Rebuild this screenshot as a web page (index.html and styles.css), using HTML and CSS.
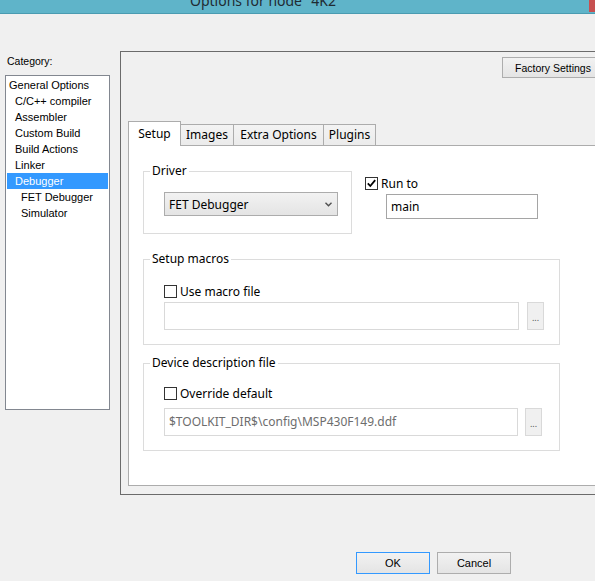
FILE: index.html
```html
<!DOCTYPE html>
<html lang="en">

<head>
    <meta charset="UTF-8">
    <title>Options for node "4K2"</title>
    <link rel="stylesheet" href="styles.css">
</head>

<body>

    <!-- Title bar -->
    <div class="titlebar">
        <span class="title">Options for node "4K2"</span>
        <span class="close"></span>
    </div>

    <div class="dialog">
        <!-- Category list -->
        <div class="sidebar">
            <div class="category-label">Category:</div>
            <ul class="category-list">
                <li>General Options</li>
                <li class="lvl1">C/C++ compiler</li>
                <li class="lvl1">Assembler</li>
                <li class="lvl1">Custom Build</li>
                <li class="lvl1">Build Actions</li>
                <li class="lvl1">Linker</li>
                <li class="lvl1 selected">Debugger</li>
                <li class="lvl2">FET Debugger</li>
                <li class="lvl2">Simulator</li>
            </ul>
        </div>

        <!-- Options panel -->
        <div class="options">
            <div class="options-top">
                <button class="btn factory">Factory Settings</button>
            </div>

            <div class="tabs">
                <div class="tab active tab-setup">Setup</div>
                <div class="tab tab-images">Images</div>
                <div class="tab tab-extra">Extra Options</div>
                <div class="tab tab-plugins">Plugins</div>
            </div>

            <div class="tab-page">
                <div class="row">
                    <div class="group driver">
                        <div class="group-title">Driver</div>
                        <div class="select">
                            <span>FET Debugger</span>
                            <svg class="chevron" width="7" height="5" viewBox="0 0 7 5">
                                <path d="M0.5 0.8 L3.5 3.8 L6.5 0.8" fill="none" stroke="#505050" stroke-width="1.4"/>
                            </svg>
                        </div>
                    </div>
                    <div class="runto">
                        <label class="check-row">
                            <svg class="checkbox" width="13" height="13" viewBox="0 0 13 13">
                                <rect x="0.5" y="0.5" width="12" height="12" fill="#fff" stroke="#333"/>
                                <path d="M2.8 6.4 L5.3 9 L10.2 3.2" fill="none" stroke="#000" stroke-width="1.8"/>
                            </svg>
                            Run to
                        </label>
                        <div class="text-input runto-input">main</div>
                    </div>
                </div>

                <div class="group macros">
                    <div class="group-title">Setup macros</div>
                    <label class="check-row">
                        <svg class="checkbox" width="13" height="13" viewBox="0 0 13 13">
                            <rect x="0.5" y="0.5" width="12" height="12" fill="#fff" stroke="#333"/>
                        </svg>
                        Use macro file
                    </label>
                    <div class="file-row">
                        <div class="text-input file-input"></div>
                        <div class="browse">...</div>
                    </div>
                </div>

                <div class="group device">
                    <div class="group-title">Device description file</div>
                    <label class="check-row">
                        <svg class="checkbox" width="13" height="13" viewBox="0 0 13 13">
                            <rect x="0.5" y="0.5" width="12" height="12" fill="#fff" stroke="#333"/>
                        </svg>
                        Override default
                    </label>
                    <div class="file-row">
                        <div class="text-input file-input ddf">$TOOLKIT_DIR$\config\MSP430F149.ddf</div>
                        <div class="browse">...</div>
                    </div>
                </div>
            </div>
        </div>
    </div>

    <!-- Dialog buttons -->
    <div class="footer">
        <button class="btn ok">OK</button>
        <button class="btn">Cancel</button>
    </div>

</body>

</html>
```

FILE: styles.css
```css
/* General Reset */
body {
    margin: 0;
    width: 595px;
    height: 581px;
    overflow: hidden;
    background: #f0f0f0;
    font-family: "Noto Sans", sans-serif;
    font-size: 12px;
    color: #000;
}

/* Title bar */
.titlebar {
    display: flex;
    height: 13px;
    overflow: hidden;
    background: #5fb4c9;
    border-bottom: 1px solid #4a9bb1;
}

.title {
    margin: -6px 0 0 190px;
    font-size: 14px;
    line-height: 14px;
    color: #1f2b33;
    white-space: nowrap;
}

.close {
    margin-left: auto;
    width: 6px;
    height: 12px;
    background: #c75050;
}

.dialog {
    display: flex;
    align-items: flex-start;
}

/* Category list */
.sidebar {
    width: 105px;
    padding-left: 5px;
    flex-shrink: 0;
}

.category-label {
    margin: 40px 0 0 2px;
    font: 10.5px/14px "Liberation Sans", Arial, sans-serif;
}

.category-list {
    list-style: none;
    margin: 7px 0 0;
    padding: 1px;
    box-sizing: border-box;
    height: 335px;
    border: 1px solid #828790;
    background: #fff;
    font: 11px "Liberation Sans", Arial, sans-serif;
}

.category-list li {
    height: 16px;
    line-height: 16px;
    padding-left: 2px;
    white-space: nowrap;
}

.category-list .lvl1 {
    padding-left: 8px;
}

.category-list .lvl2 {
    padding-left: 14px;
}

.category-list .selected {
    background: #3399ff;
    color: #fff;
}

/* Options panel */
.options {
    display: flex;
    flex-direction: column;
    flex-shrink: 0;
    box-sizing: border-box;
    width: 490px;
    height: 444px;
    margin: 37px 0 0 10px;
    padding: 5px 0 8px 7px;
    border: 1px solid #6b6b6b;
}

.options-top {
    display: flex;
    justify-content: flex-end;
}

.btn {
    height: 21px;
    padding: 0;
    border: 1px solid #adadad;
    background: linear-gradient(#f2f2f2, #e4e4e4);
    font: 10.5px "Liberation Sans", Arial, sans-serif;
    color: #000;
}

.factory {
    width: 102px;
    margin-right: 5px;
}

/* Tabs */
.tabs {
    display: flex;
    align-items: flex-end;
    margin-top: 43px;
}

.tab {
    box-sizing: border-box;
    height: 21px;
    margin-right: -1px;
    border: 1px solid #acacac;
    border-bottom: 0;
    background: linear-gradient(#f3f3f3, #ebebeb);
    line-height: 20px;
    text-align: center;
    white-space: nowrap;
}

.tab.active {
    position: relative;
    z-index: 1;
    height: 25px;
    margin-bottom: -1px;
    background: #fff;
    line-height: 24px;
}

.tab-setup {
    width: 53px;
}

.tab-images {
    width: 54px;
}

.tab-extra {
    width: 91px;
}

.tab-plugins {
    width: 53px;
}

.tab-page {
    flex: 1;
    padding: 25px 0 0 14px;
    background: #fff;
    border: 1px solid #acacac;
}

/* Group boxes */
.row {
    display: flex;
    align-items: flex-start;
}

.group {
    box-sizing: border-box;
    border: 1px solid #dcdcdc;
    padding-left: 20px;
}

.group-title {
    width: fit-content;
    margin: -9px 0 0 -14px;
    padding: 0 2px;
    background: #fff;
    line-height: 16px;
}

.driver {
    width: 209px;
    padding-bottom: 17px;
}

.select {
    display: flex;
    align-items: center;
    justify-content: space-between;
    box-sizing: border-box;
    width: 174px;
    height: 24px;
    margin-top: 13px;
    padding: 0 5px 0 4px;
    border: 1px solid #acacac;
    background: linear-gradient(#f2f2f2, #e4e4e4);
}

.runto {
    margin: 4px 0 0 13px;
}

.check-row {
    display: flex;
    align-items: center;
    gap: 3px;
    height: 16px;
    white-space: nowrap;
}

.text-input {
    box-sizing: border-box;
    background: #fff;
    white-space: nowrap;
}

.runto-input {
    width: 152px;
    height: 25px;
    margin: 3px 0 0 21px;
    padding-left: 4px;
    border: 1px solid #a5a5a5;
    line-height: 23px;
}

.macros {
    width: 417px;
    margin-top: 25px;
    padding-bottom: 14px;
}

.macros .check-row {
    margin-top: 16px;
}

.macros .file-row {
    margin-top: 3px;
}

.device {
    width: 417px;
    margin-top: 18px;
    padding-bottom: 14px;
}

.device .check-row {
    margin-top: 14px;
}

.device .file-row {
    margin-top: 7px;
    gap: 7px;
}

.file-row {
    display: flex;
    gap: 8px;
}

.file-input {
    width: 355px;
    height: 28px;
    padding-left: 4px;
    border: 1px solid #d9d9d9;
    line-height: 26px;
}

.ddf {
    width: 354px;
    color: #6d6d6d;
}

.browse {
    box-sizing: border-box;
    width: 17px;
    height: 28px;
    border: 1px solid #d9d9d9;
    background: #f0f0f0;
    font-size: 9px;
    line-height: 30px;
    text-align: center;
    color: #555;
}

/* Dialog buttons */
.footer {
    display: flex;
    gap: 7px;
    margin-top: 57px;
    padding-left: 356px;
}

.footer .btn {
    width: 74px;
    height: 22px;
    font-size: 11px;
}

.footer .ok {
    border-color: #3399ff;
}
```
